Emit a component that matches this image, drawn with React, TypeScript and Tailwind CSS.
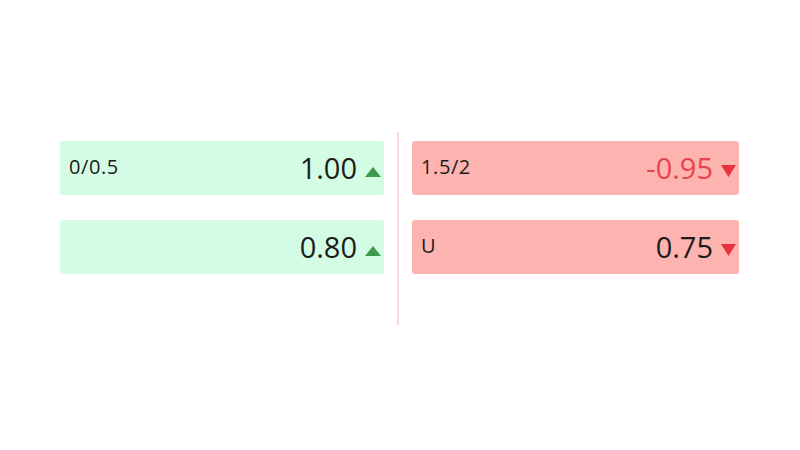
import React from "react";

type Cell = { label: string; value: string; up: boolean; neg?: boolean };

const left: Cell[] = [
  { label: "0/0.5", value: "1.00", up: true },
  { label: "", value: "0.80", up: true },
];
const right: Cell[] = [
  { label: "1.5/2", value: "-0.95", up: false, neg: true },
  { label: "U", value: "0.75", up: false },
];

function Up() {
  return (
    <svg width="16" height="10" viewBox="0 0 16 10" className="mb-[3px]">
      <polygon points="8,0 16,10 0,10" fill="#3c9a4b" />
    </svg>
  );
}
function Down() {
  return (
    <svg width="15" height="12" viewBox="0 0 15 12" className="mb-[3px]">
      <polygon points="0,0 15,0 7.5,12" fill="#e8323d" />
    </svg>
  );
}

function Box({ c, green }: { c: Cell; green: boolean }) {
  return (
    <div
      className={
        "h-[54px] rounded-[3px] flex items-center justify-between pl-[9px] pr-[3px] " +
        (green ? "bg-[#d4fbe3]" : "bg-[#fdb3af]")
      }
    >
      <span className="text-[20px] tracking-[0.6px] text-[#1c1c1c] -mt-[2px]">{c.label}</span>
      <div className="flex items-end gap-[8px]">
        <span
          className={
            "text-[29px] leading-[36px] " +
            (c.neg ? "text-[#e6454e]" : "text-[#1c1c1c]")
          }
        >
          {c.value}
        </span>
        <span className="flex items-end h-[36px] pb-[6px]">{c.up ? <Up /> : <Down />}</span>
      </div>
    </div>
  );
}

export default function App() {
  return (
    <div
      className="w-[800px] h-[450px] bg-white flex pt-[132px] pl-[60px]"
      style={{ fontFamily: '"Open Sans", "Noto Sans", sans-serif' }}
    >
      <div className="flex h-[193px]">
        <div className="w-[324px] flex flex-col gap-[25px] pt-[9px]">
          {left.map((c, i) => (
            <Box key={i} c={c} green />
          ))}
        </div>
        <div className="w-[2px] bg-[#fbd9d9] ml-[13px] mr-[13px]" />
        <div className="w-[327px] flex flex-col gap-[25px] pt-[9px]">
          {right.map((c, i) => (
            <Box key={i} c={c} green={false} />
          ))}
        </div>
      </div>
    </div>
  );
}
